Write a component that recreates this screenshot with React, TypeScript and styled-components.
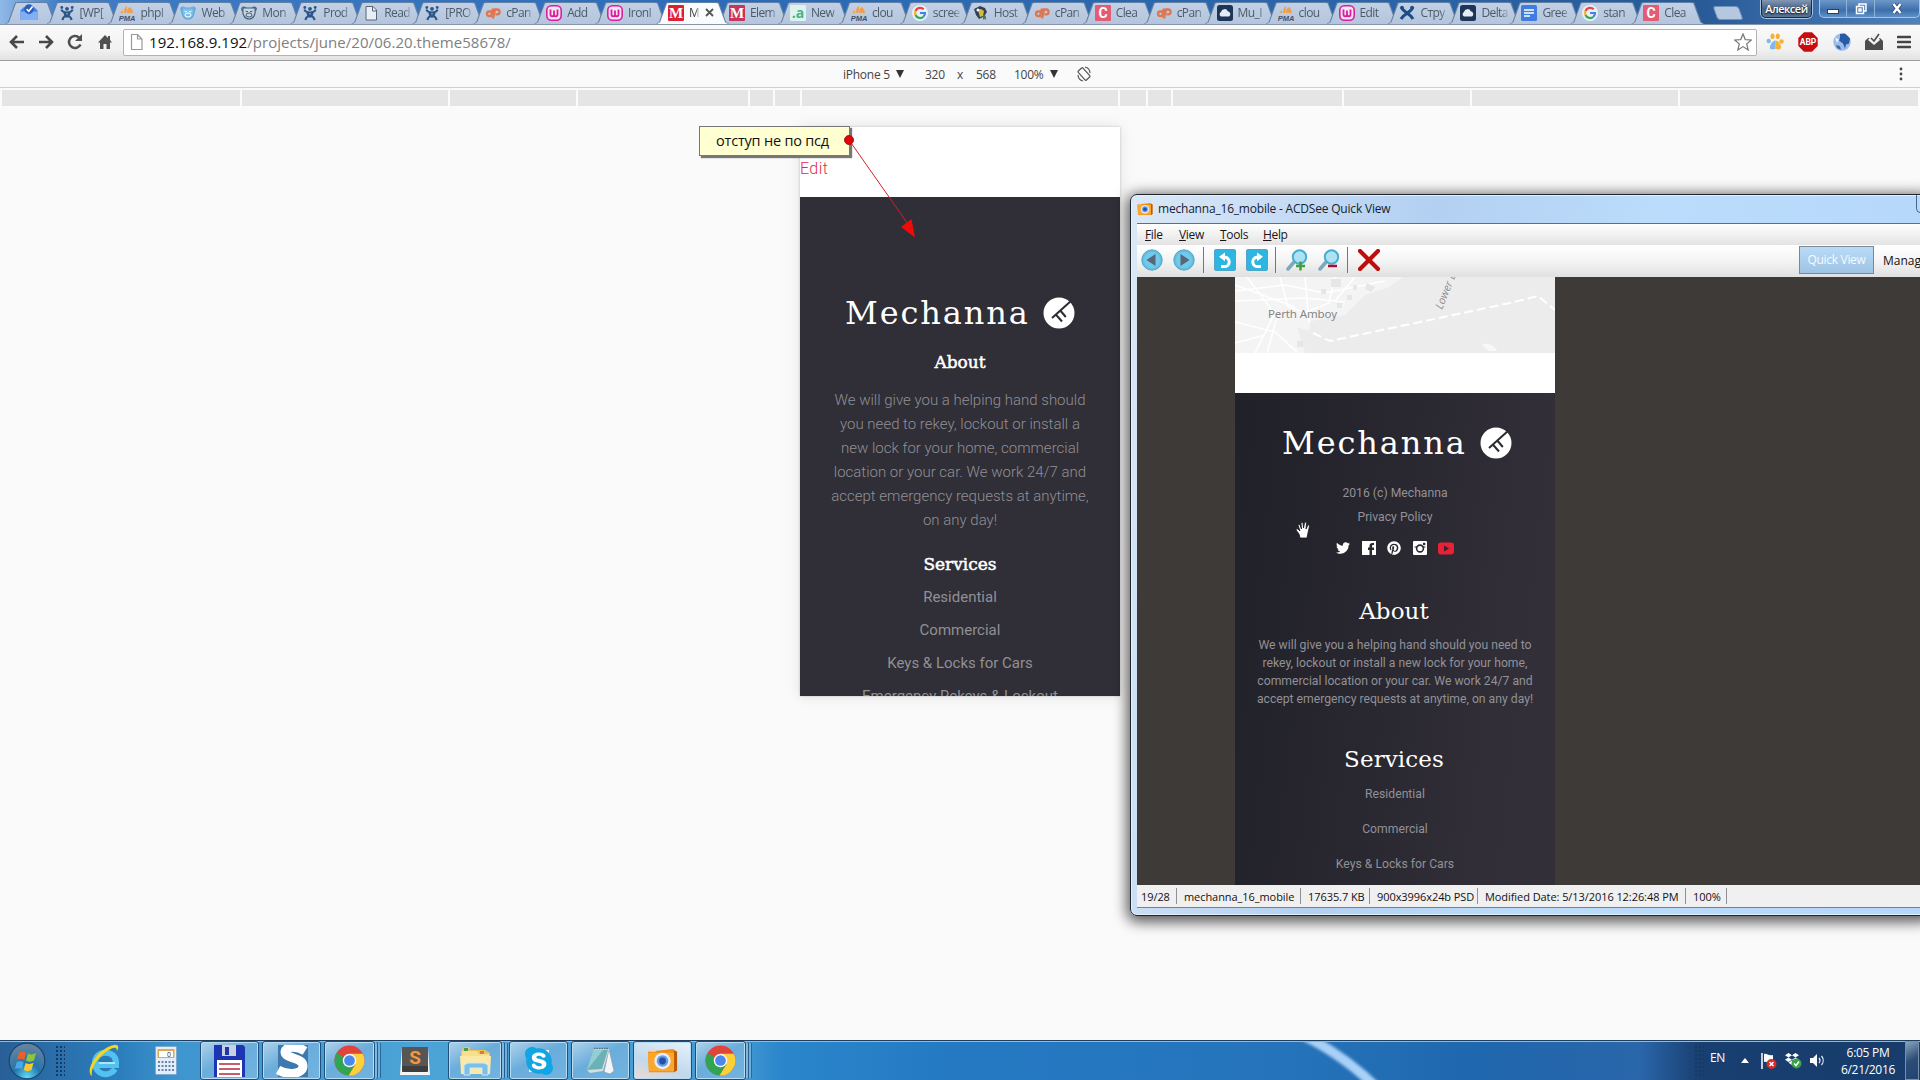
import React from "react";
import styled, { createGlobalStyle, css } from "styled-components";
import { FaTwitter, FaPinterest, FaSkype, FaDropbox } from "react-icons/fa";

const ui = `"Open Sans", "Noto Sans", "Liberation Sans", sans-serif`;
const slab = `"Roboto Slab", "DejaVu Serif", serif`;

const Global = createGlobalStyle`
  html, body { margin: 0; padding: 0; overflow: hidden; }
  * { box-sizing: border-box; }
  svg { display: block; flex: none; }
`;

const Screen = styled.div`
  width: 1920px;
  height: 1080px;
  display: flex;
  flex-direction: column;
  position: relative;
  overflow: hidden;
  background: #fafafa;
  font-family: ${ui};
`;

/* ---------- tab strip ---------- */
const TabStrip = styled.div`
  height: 24px;
  flex: none;
  display: flex;
  padding-left: 5px;
  overflow: hidden;
  background: linear-gradient(90deg, #8fb9e6 0, #3f7cc6 60px, #2c6cb9 700px, #2a64a8 1400px, #275a97 1700px, #4f82ba 1920px);
`;
const Tab = styled.div<{ $active?: boolean; $wide?: boolean }>`
  position: relative;
  isolation: isolate;
  flex: none;
  width: ${p => (p.$wide ? 53 : 73)}px;
  margin-right: ${p => (p.$wide ? -11.5 : -12.06)}px;
  padding: 1px 0 0 ${p => (p.$wide ? 15 : 12)}px;
  display: flex;
  align-items: center;
  z-index: ${p => (p.$active ? 2 : 1)};
  &::before, &::after {
    content: "";
    position: absolute;
    z-index: -1;
    inset: 0;
    background: #6380a3;
    clip-path: polygon(0 100%, 3px 92%, 10px 10%, 13px 2px, calc(100% - 13px) 2px, calc(100% - 10px) 10%, calc(100% - 3px) 92%, 100% 100%);
  }
  &::after {
    inset: 1px 1px 0 1px;
    background: ${p => (p.$active ? "#fafbfc" : "linear-gradient(#c3d1e6, #b3c5dd)")};
  }
`;
const TabLabel = styled.span<{ $active?: boolean }>`
  margin-left: 5px;
  flex: none;
  width: ${p => (p.$active ? 10 : 28)}px;
  font-size: 12px;
  line-height: 20px;
  letter-spacing: -0.6px;
  color: ${p => (p.$active ? "#444" : "#4d5a69")};
  white-space: nowrap;
  mask-image: linear-gradient(90deg, #000 72%, rgba(0, 0, 0, 0.25) 95%);
`;
const CloseGlyph = styled.svg`
  margin-left: 6px;
`;
const NewTab = styled.div`
  width: 29px;
  height: 14px;
  margin: 6px 0 0 23px;
  transform: skewX(20deg);
  border-radius: 3px;
  background: #b5c8df;
  border: 1px solid #6f93bd;
`;
const UserBadge = styled.div`
  width: 58px;
  height: 18px;
  margin-left: 20px;
  border: 1px solid #16294a;
  border-top: 0;
  border-radius: 0 0 5px 5px;
  box-shadow: 0 0 0 1px #a9c4e2;
  background: linear-gradient(#8298b4, #4a6486 50%, #5a7698);
  color: #fff;
  font-size: 11px;
  font-weight: 600;
  line-height: 17px;
  letter-spacing: -0.5px;
  text-align: center;
  text-shadow: 0 1px 2px #000;
`;
const Controls = styled.div`
  display: flex;
  margin-left: 7px;
  width: 101px;
  height: 18px;
  border: 1px solid #a5c3e4;
  border-top: 0;
  border-radius: 0 0 5px 5px;
  background: linear-gradient(#6e97c8, #3d6fab 60%, #5f90c6);
`;
const Control = styled.div<{ $w: number; $low?: boolean }>`
  width: ${p => p.$w}px;
  display: flex;
  align-items: center;
  justify-content: center;
  padding-top: ${p => (p.$low ? 5 : 0)}px;
  & + & { border-left: 1px solid #8fb2d9; }
`;

/* ---------- address bar ---------- */
const Toolbar = styled.div`
  height: 37px;
  flex: none;
  display: flex;
  align-items: center;
  padding: 0 9px 1px 9px;
  border-top: 1px solid #8795a8;
  border-bottom: 1px solid #9c9c9c;
  background: linear-gradient(#fafafa, #f1f1f1 70%, #e2e2e2);
`;
const NavButtons = styled.div`
  display: flex;
  gap: 13.2px;
  width: 114px;
`;
const Omnibox = styled.div`
  width: 1634px;
  height: 27px;
  display: flex;
  align-items: center;
  padding: 0 4px 0 6px;
  border: 1px solid #b3b3b0;
  border-radius: 2px;
  background: #fff;
`;
const Url = styled.div`
  flex: 1;
  margin-left: 5px;
  font-size: 15px;
  line-height: 22px;
  letter-spacing: 0.05px;
  color: #808080;
  span { color: #111; }
`;
const Extensions = styled.div`
  display: flex;
  flex: 1;
  margin-left: 9px;
  justify-content: space-between;
  align-items: center;
`;

/* ---------- device mode ---------- */
const DeviceBar = styled.div`
  height: 27px;
  flex: none;
  display: flex;
  align-items: center;
  padding: 0 14px 0 843px;
  border-bottom: 1px solid #cfcfcf;
  background: #fafafa;
  font-size: 12px;
  letter-spacing: -0.25px;
  color: #444;
`;
const DeviceItem = styled.span<{ $w: number; $indent?: number }>`
  width: ${p => p.$w}px;
  padding-left: ${p => p.$indent ?? 0}px;
  flex: none;
  white-space: nowrap;
`;
const Caret = styled.i`
  width: 0;
  height: 0;
  border: 4px solid transparent;
  border-top: 8px solid #333;
  border-bottom: 0;
`;
const Grow = styled.div`flex: 1;`;
const MediaBar = styled.div`
  height: 20px;
  flex: none;
  display: flex;
  gap: 2px;
  padding: 2px 2px;
  background: #fbfbfb;
`;
const Segment = styled.div<{ $w: number }>`
  flex: ${p => p.$w} 0 0;
  background: #e5e5e5;
`;
const Viewport = styled.div`
  flex: 1;
  display: flex;
  justify-content: center;
  align-items: flex-start;
  padding-top: 19px;
  background: #fafafa;
`;

/* ---------- phone page ---------- */
const Phone = styled.div`
  width: 320px;
  height: 569px;
  overflow: hidden;
  background: #fff;
  box-shadow: 0 0 2px #bbb, 0 0 14px rgba(0, 0, 0, 0.1);
  font-family: Roboto, sans-serif;
  text-align: center;
`;
const EditRow = styled.div`
  height: 70px;
  padding-top: 30px;
  text-align: left;
  font-size: 16px;
  font-weight: 300;
  line-height: 24px;
  letter-spacing: 0.4px;
  color: #e42b46;
`;
const PhoneFooter = styled.div`
  height: 499px;
  padding-top: 96px;
  background: #302e36;
  color: #909095;
`;
const BrandRow = styled.div`
  height: 40px;
  display: flex;
  align-items: center;
  padding-left: 45px;
`;
const BrandText = styled.div`
  width: 198px;
  text-align: left;
  font-family: ${slab};
  font-size: 32px;
  line-height: 40px;
  letter-spacing: 1.9px;
  color: #fff;
  white-space: nowrap;
`;
const Heading = styled.div<{ $big?: boolean; $top: number }>`
  margin-top: ${p => p.$top}px;
  font-family: ${slab};
  color: #fff;
  ${p => p.$big
    ? css`font-size: 23px; line-height: 34px; letter-spacing: 0.1px; padding-right: 2px;`
    : css`font-size: 17px; line-height: 26px; letter-spacing: 0; -webkit-text-stroke: 0.5px #fff;`}
`;
const Copy = styled.div<{ $top: number; $size: number; $line: number; $light?: boolean }>`
  margin-top: ${p => p.$top}px;
  font-size: ${p => p.$size}px;
  line-height: ${p => p.$line}px;
  font-weight: ${p => (p.$light ? 300 : 400)};
  white-space: pre-line;
`;

/* ---------- annotation ---------- */
const Note = styled.div`
  position: absolute;
  left: 699px;
  top: 126px;
  width: 151px;
  height: 30px;
  padding-left: 16px;
  border: 1px solid #777;
  box-shadow: 2px 2px 1px #777;
  background: #ffffd2;
  color: #111;
  font: 14.5px/27px "Open Sans", sans-serif;
  letter-spacing: -0.2px;
  white-space: nowrap;
`;
const Arrow = styled.svg`
  position: absolute;
  left: 840px;
  top: 130px;
`;

/* ---------- image viewer window ---------- */
const Window = styled.div`
  position: absolute;
  left: 1130px;
  top: 194px;
  width: 800px;
  height: 722px;
  display: flex;
  flex-direction: column;
  border: 1px solid #20252c;
  border-radius: 7px;
  padding: 0 0 7px 6px;
  background: linear-gradient(100deg, #dbe8f6 0, #b3d0f2 300px, #bbdcfb 520px, #b4d6fb);
  box-shadow: inset 0 0 0 1px #e3f1ff, 0 3px 14px 3px rgba(0, 0, 0, 0.65);
`;
const TitleBar = styled.div`
  height: 28px;
  flex: none;
  display: flex;
  align-items: center;
  font-size: 12px;
  letter-spacing: -0.2px;
  color: #16222e;
  white-space: nowrap;
  span { margin: 0 0 1px 5px; }
`;
const TitleButtonEdge = styled.div`
  width: 13px;
  height: 18px;
  margin: 0 0 10px auto;
  border: 1px solid #4b6684;
  border-top: 0;
  border-right: 0;
  border-radius: 0 0 0 5px;
`;
const MenuBar = styled.div`
  height: 22px;
  flex: none;
  display: flex;
  padding-left: 8px;
  border-top: 1px solid #56708f;
  background: linear-gradient(#fff, #e3e3e3);
  font-size: 12px;
  line-height: 21px;
  letter-spacing: -0.35px;
  color: #1a1416;
`;
const MenuItem = styled.div<{ $w: number }>`
  width: ${p => p.$w}px;
  &::first-letter { text-decoration: underline; }
`;
const ViewerTools = styled.div`
  height: 32px;
  flex: none;
  display: flex;
  align-items: center;
  padding-left: 4px;
  background: linear-gradient(#fff, #f4f4f4 50%, #e0e0e0);
  & > * { flex: none; }
`;
const ToolSlot = styled.div<{ $w: number }>`
  width: ${p => p.$w}px;
  padding-bottom: 3px;
`;
const ToolDivider = styled.div`
  width: 1px;
  height: 26px;
  margin: 0 10px 3px 0;
  background: #70777e;
`;
const ModeButton = styled.div`
  width: 75px;
  height: 28px;
  margin: 0 9px 2px 419px;
  border: 1px solid #7c8793;
  background: linear-gradient(#b9dbf7, #9fc3e4);
  color: #f4faff;
  font-size: 12px;
  line-height: 26px;
  letter-spacing: -0.3px;
  text-align: center;
`;
const ModeLabel = styled.div`
  font-size: 12px;
  padding-bottom: 2px;
  color: #111;
`;
const Canvas = styled.div`
  flex: 1;
  overflow: hidden;
  padding-left: 98px;
  background: #3e3a37;
`;
const DocumentPage = styled.div`
  width: 320px;
  background: #fff;
  text-align: center;
  font-family: Roboto, sans-serif;
`;
const DocFooter = styled.div`
  height: 500px;
  margin-top: 40px;
  padding-top: 30px;
  color: #919197;
  background: linear-gradient(97deg, #202129, #29272f 45%, #322f38 85%);
`;
const DocBrand = styled(BrandRow)`padding-left: 47px;`;
const Socials = styled.div`
  height: 20px;
  margin: 9px 0 0 101px;
  display: flex;
  align-items: center;
  gap: 11.5px;
  color: #fff;
`;
const StatusBar = styled.div`
  height: 23px;
  flex: none;
  display: flex;
  align-items: center;
  border-bottom: 1px solid #6f8296;
  background: #f1f0f0;
  font-size: 11px;
  letter-spacing: -0.07px;
  color: #111;
`;
const StatusCell = styled.div<{ $w: number; $first?: boolean }>`
  width: ${p => p.$w}px;
  height: 16px;
  padding-left: ${p => (p.$first ? 4 : 7)}px;
  line-height: 17px;
  border-right: 1px solid #8d9298;
  white-space: nowrap;
`;
const Hand = styled.svg`
  position: absolute;
  left: 1295px;
  top: 521px;
`;

/* ---------- taskbar ---------- */
const Taskbar = styled.div`
  height: 40px;
  flex: none;
  display: flex;
  align-items: center;
  border-top: 1px solid #1f3f60;
  box-shadow: inset 0 1px 0 #8fbbe0;
  background: linear-gradient(90deg, #285f96 0, #2a6da9 50px, #2b7ebc 120px, #3f95cd 180px, #4ba3d6 420px, #4599d3 740px, #2b86cb 780px, #2479c2 960px, #2574bb 1280px, #1f67ae 1480px, #2a66aa 1640px, #193f70 1700px, #173c6c 1920px);
  & > * { flex: none; }
`;
const Orb = styled.div`
  width: 55px;
  padding-left: 8px;
`;
const Grip = styled.div`
  width: 10px;
  height: 32px;
  background: radial-gradient(circle, #143a63 45%, transparent 50%) 0 0 / 4px 4px;
`;
const Launch = styled.div<{ $w: number }>`
  width: ${p => p.$w}px;
  height: 39px;
  display: flex;
  align-items: center;
  justify-content: center;
`;
const TaskButton = styled.div<{ $w: number; $gap: number; $active?: boolean; $stack?: boolean }>`
  width: ${p => p.$w}px;
  height: 39px;
  margin-right: ${p => p.$gap}px;
  display: flex;
  align-items: center;
  justify-content: center;
  border: 1px solid #1f4f7c;
  border-radius: 3px;
  background: ${p => (p.$active
    ? "linear-gradient(20deg, #f0d9cf, #c2d8ec 40%, #e6f2fb)"
    : "linear-gradient(150deg, #b0d2ea, #6aaddb 45%, #72b4e0)")};
  box-shadow: inset 0 0 0 1px #b9dcf3${p => (p.$stack ? ", 3px 0 0 -1px #7fb9e0, 4px 0 0 -1px #245d8d, 7px 0 0 -2px #6fb0db, 8px 0 0 -2px #2a6698" : "")};
`;
const Wallpaper = styled.div`
  width: 941px;
  overflow: hidden;
`;
const Tray = styled.div`
  display: flex;
  align-items: center;
  width: 225px;
  height: 39px;
  color: #fff;
  font-size: 12px;
  letter-spacing: -0.3px;
  & > * { flex: none; }
`;
const Lang = styled.div`
  width: 31px;
  margin: 0 0 6px 6px;
`;
const TrayIcons = styled.div`
  display: flex;
  align-items: center;
  gap: 8px;
  width: 97px;
  & > :first-child { margin-right: 3px; }
`;
const Clock = styled.div`
  width: 60px;
  text-align: center;
  line-height: 17px;
  white-space: nowrap;
`;
const ShowDesktop = styled.div`
  width: 14px;
  height: 39px;
  margin-left: auto;
  border: 1px solid #7790ad;
  background: linear-gradient(150deg, #8ca3bd, #2b4c76 50%, #224570);
`;

/* ---------- drawings ---------- */
type Kind = "jira" | "pma" | "bear" | "bear2" | "file" | "cp" | "w" | "m" | "m2" | "a" | "g" | "host" | "c" | "cloud" | "x" | "doc" | "inbox";

const FavText = ({ bg, fill = "#fff", t, font = "Liberation Serif", size = 15 }: { bg: string; fill?: string; t: string; font?: string; size?: number }) => (
  <svg width="16" height="16" viewBox="0 0 16 16">
    <rect width="16" height="16" rx="1" fill={bg} />
    <text x="8" y="13" textAnchor="middle" fontFamily={font} fontWeight="700" fontSize={size} fill={fill}>{t}</text>
  </svg>
);

function Favicon({ kind }: { kind: Kind }) {
  const s = { width: 16, height: 16, viewBox: "0 0 16 16" };
  switch (kind) {
    case "inbox":
      return <svg {...s} width="18" height="17"><path d="M0 6l3-3h10l3 3v9H0z" fill="#3f7fe0" /><path d="M0 7h5l3 3 3-3h5v8H0z" fill="#7fb0f5" /><circle cx="8" cy="4.800" r="4.500" fill="#2b5cb8" /><path d="M5.800 4.800l2 2 3.500-4.500" stroke="#fff" strokeWidth="1.500" fill="none" /></svg>;
    case "jira":
      return <svg {...s}><path d="M2.500 4.500Q3.500 7.500 8 7.500T13.500 4.500M5.500 7q0 3 2.500 4.500 2.500-1.500 2.500-4.500M3.500 15q.5-3.500 4.500-4.500 4 1 4.500 4.500" fill="none" stroke="#2a5588" strokeWidth="2.200" /><circle cx="8" cy="3.800" r="1.900" fill="#2a5588" /><circle cx="2.800" cy="2.500" r="1.400" fill="#2a5588" /><circle cx="13.200" cy="2.500" r="1.400" fill="#2a5588" /></svg>;
    case "x":
      return <svg {...s}><path d="M2 2c3 6 9 6 12 12M14 2c-2 6-9 6-12 12" stroke="#1d4c83" strokeWidth="3" fill="none" /><circle cx="3" cy="2.500" r="1.800" fill="#1d4c83" /><circle cx="13" cy="2.500" r="1.800" fill="#1d4c83" /></svg>;
    case "pma":
      return <svg {...s}><path d="M5 8c0-4 1-6 3-7 0 3 0 5-1 7zM8 8c0-4 1-5 3-6 2 2 3 4 3 6zM1 8l3-3v3z" fill="#efa04c" /><text x="8" y="15.500" textAnchor="middle" fontFamily="Liberation Sans" fontStyle="italic" fontWeight="700" fontSize="7.500" fill="#44506b">PMA</text></svg>;
    case "bear":
    case "bear2": {
      const c = kind === "bear" ? "#5aa7dc" : "#3f5a72";
      return <svg {...s}><circle cx="2.800" cy="4" r="2" fill="none" stroke={c} strokeWidth="1.200" /><circle cx="13.200" cy="4" r="2" fill="none" stroke={c} strokeWidth="1.200" /><path d="M2 3h12c1 7-2 11-6 11S1 10 2 3z" fill={kind === "bear" ? "#7fbfe9" : "#c9d6e6"} stroke={c} strokeWidth="1.200" /><path d="M4.500 6l1.500 1 1-1M9 6l1 1 1.500-1" stroke={kind === "bear" ? "#fff" : c} fill="none" /><ellipse cx="8" cy="10" rx="3" ry="2" fill="none" stroke={kind === "bear" ? "#fff" : c} /></svg>;
    }
    case "file":
      return <svg {...s}><path d="M3 1.500h7l3.500 3.500v10H3z" fill="#e8eef5" stroke="#5b6672" /><path d="M9.500 2v4H13" fill="none" stroke="#5b6672" /></svg>;
    case "cp":
      return <svg {...s} fill="none" stroke="#e0764f" strokeWidth="2.300"><path d="M6.500 6.500H4.300a2.300 2.300 0 0 0 0 4.600H6L8 3.500M8 13.500l2-9h2.200a2.400 2.400 0 0 1 0 4.800H10.500" /></svg>;
    case "w":
      return <svg {...s}><rect x="0.800" y="0.800" width="14.400" height="14.400" rx="4.500" fill="#f7e2f1" stroke="#d91fa0" strokeWidth="1.600" /><path d="M4.500 4.500v5a1.700 1.700 0 0 0 3.500 0V5.500v4a1.700 1.700 0 0 0 3.500 0v-5" fill="none" stroke="#d91fa0" strokeWidth="1.800" /></svg>;
    case "m": return <FavText bg="#e0202f" t="M" />;
    case "m2": return <FavText bg="#c8355c" t="M" />;
    case "a": return <FavText bg="#def3ee" fill="#3fb58a" t=".a" font="Open Sans" size={14} />;
    case "c": return <FavText bg="#e45b74" t="C" font="Roboto" size={14} />;
    case "g":
      return <svg {...s}><circle cx="8" cy="8" r="8" fill="#e9eff7" /><g fill="none" strokeWidth="2.200"><path d="M11.700 4.300A5 5 0 0 0 3.500 6" stroke="#e8483b" /><path d="M3.500 6a5 5 0 0 0 0 4" stroke="#f2b51c" /><path d="M3.500 10a5 5 0 0 0 8 1.700" stroke="#3aa757" /><path d="M11.500 11.700A5 5 0 0 0 13 8H8" stroke="#4481ec" /></g></svg>;
    case "host":
      return <svg {...s}><path d="M1 4l6-3 5 2 2 4-2 3 1 5-3-3-4 2-3-4z" fill="#31405a" /><path d="M5 5l3-1 3 2-1 5-3 1z" fill="#d8b93a" /><circle cx="5" cy="5" r="1.500" fill="#fff" /><path d="M10 8l3 4-3 3z" fill="#427a52" /></svg>;
    case "cloud":
      return <svg {...s}><rect width="16" height="16" rx="2.500" fill="#1d3557" /><path d="M4 11.500a2.500 2.500 0 0 1 0-4.500 3.600 3.600 0 0 1 6.800-.8A2.900 2.900 0 0 1 12 11.500z" fill="#e4edf6" /></svg>;
    case "doc":
      return <svg {...s}><rect width="16" height="16" rx="1.500" fill="#3f7ee0" /><path d="M3 5h10M3 8h10M3 11h6" stroke="#fff" strokeWidth="1.400" /></svg>;
  }
}

const Emblem = () => (
  <svg width="32" height="32" viewBox="0 0 32 32">
    <circle cx="16" cy="16" r="15.500" fill="#fff" />
    <path d="M28.500 3.500L9 21M12.800 17.500l6.200 7M17.300 13.500l5.500 6.500" stroke="#2c2a33" strokeWidth="2" fill="none" />
  </svg>
);

const ChromeLogo = () => (
  <svg width="31" height="31" viewBox="0 0 32 32">
    <circle cx="16" cy="16" r="15.500" fill="#e0443a" />
    <path d="M2.600 8.300A15.500 15.500 0 0 0 15 31.500l7-12-6-3.500z" fill="#31a352" />
    <path d="M15 31.500A15.500 15.500 0 0 0 29.700 9H16l6 11z" fill="#fbd03b" />
    <circle cx="16" cy="16" r="7" fill="#f4f6f6" />
    <circle cx="16" cy="16" r="5.500" fill="#4a88ea" />
  </svg>
);

const Camera = ({ size }: { size: number }) => (
  <svg width={size} height={size} viewBox="0 0 32 32">
    <path d="M1 7l26-3 4 3v19l-3 2L2 28z" fill="#f08c14" />
    <path d="M1 8h27v19H2z" fill="#fba62c" /><path d="M28 6l3 1v19l-3 2z" fill="#b85a0a" />
    <circle cx="16" cy="16.500" r="8.500" fill="#e6edf7" /><circle cx="16" cy="16.500" r="6" fill="#6a9be2" /><circle cx="16" cy="16.500" r="3.500" fill="#1f50ae" />
    <path d="M4 5l5-1v3H4z" fill="#f9d9a0" />
  </svg>
);

const RoundArrow = ({ flip }: { flip?: boolean }) => (
  <svg width="22" height="22" viewBox="0 0 22 22">
    <circle cx="11" cy="11" r="10.200" fill="#5fc0e2" stroke="#58a4c4" /><circle cx="11" cy="11" r="8" fill="#73c9e8" />
    <path d={flip ? "M7.500 5l9 6-9 6z" : "M14.500 5l-9 6 9 6z"} fill="#56677d" />
  </svg>
);
const Rotate = ({ flip }: { flip?: boolean }) => (
  <svg width="22" height="22" viewBox="0 0 22 22">
    <rect x="0.500" y="0.500" width="21" height="21" rx="1.500" fill="#2db6e2" stroke="#51a5c7" />
    <g transform={flip ? "translate(22 0) scale(-1 1)" : undefined}>
      <path d="M7 17.500h3.500a4.700 4.700 0 0 0 1-9.300H9" fill="none" stroke="#fff" strokeWidth="3" /><path d="M5 7.800l6-4.300v8.700z" fill="#fff" />
    </g>
  </svg>
);
const Magnifier = ({ minus }: { minus?: boolean }) => (
  <svg width="22" height="22" viewBox="0 0 22 22">
    <path d="M2 20l7-8" stroke="#7da9bd" strokeWidth="3.500" strokeLinecap="round" />
    <circle cx="13.500" cy="8" r="6.700" fill="#aee2f2" stroke="#45aed2" strokeWidth="2" />
    {minus ? <path d="M10 17h9" stroke="#a30f2c" strokeWidth="2.500" /> : <path d="M10 17h9M14.500 12.500v9" stroke="#41a03c" strokeWidth="2.500" />}
  </svg>
);

const Map = () => (
  <svg width="320" height="76" viewBox="0 0 320 76">
    <rect width="320" height="76" fill="#ececec" />
    <path d="M0 0h168l-14 10-24 8-20 20-34 6-2 10-12-4 8 26H0z" fill="#f4f4f4" />
    <g stroke="#fff" fill="none" strokeWidth="1.500">
      <path d="M0 14l50-6 40 8 60-12M0 24l70-3 40 4M12 0l30 40-10 36M45 0l8 30 26 8M70 0l4 46M100 0l-6 26-30 12M0 45l40 10 22 20M20 76l20-40M0 8l60 22M120 0l-20 24M0 66l30-8" />
    </g>
    <g fill="#e6e6e6"><path d="M96 2h10v8H96zM112 18h5v5h-5zM132 6l8 4-4 5-6-3zM102 26h5v5h-5zM86 12h5v5h-5zM118 8h4v5h-4z" /><path d="M62 64h6v6h-6z" /></g>
    <path d="M78 56l17 8 180-38 28-7 17 14" fill="none" stroke="#fff" strokeWidth="2" strokeDasharray="9 4" />
    <path d="M247 68c6-3 12 0 15 6h-8z" fill="#f8f8f8" />
    <text x="33" y="41" fontFamily="Noto Sans" fontSize="11.500" fill="#858585" textLength="69">Perth Amboy</text>
    <text x="0" y="0" transform="translate(207 33) rotate(-68)" fontFamily="Open Sans" fontStyle="italic" fontSize="11" fill="#8c8c8c">Lower B</text>
  </svg>
);

const tabs: [Kind, string][] = [
  ["jira", "[WP["], ["pma", "phpI"], ["bear", "Web"], ["bear2", "Mon"], ["jira", "Prod"], ["file", "Read"], ["jira", "[PRO"],
  ["cp", "cPan"], ["w", "Add"], ["w", "IronI"], ["m", "M"], ["m2", "Elem"], ["a", "New"], ["pma", "clou"], ["g", "scree"],
  ["host", "Host"], ["cp", "cPan"], ["c", "Clea"], ["cp", "cPan"], ["cloud", "Mu_I"], ["pma", "clou"], ["w", "Edit"],
  ["x", "Стру"], ["cloud", "Delta"], ["doc", "Gree"], ["g", "stan"], ["c", "Clea"],
];
const segments = [238, 206, 126, 170, 23, 25, 315, 26, 23, 169, 126, 206, 238];

export default function App() {
  return (
    <Screen>
      <Global />
      <TabStrip>
        <Tab $wide><Favicon kind="inbox" /></Tab>
        {tabs.map(([k, label], i) => (
          <Tab key={i} $active={i === 10}>
            <Favicon kind={k} />
            <TabLabel $active={i === 10}>{label}</TabLabel>
            {i === 10 && <CloseGlyph width="9" height="9" viewBox="0 0 9 9"><path d="M1 1l7 7M8 1L1 8" stroke="#555" strokeWidth="1.800" /></CloseGlyph>}
          </Tab>
        ))}
        <NewTab />
        <UserBadge>Алексей</UserBadge>
        <Controls>
          <Control $w={27} $low><svg width="12" height="5"><rect x="0.500" y="0.500" width="11" height="4" fill="#fff" stroke="#333c50" /></svg></Control>
          <Control $w={28}><svg width="12" height="12" fill="none" stroke="#fff" strokeWidth="1.500"><path d="M4 3V1h7v7H9" /><rect x="1.500" y="3.500" width="7" height="7" /><rect x="4" y="6" width="2" height="2" /></svg></Control>
          <Control $w={46}><svg width="12" height="11"><path d="M2.500 1l7 9M9.500 1l-7 9" stroke="#28456c" strokeWidth="4" /><path d="M2.500 1l7 9M9.500 1l-7 9" stroke="#fff" strokeWidth="2.500" /></svg></Control>
        </Controls>
      </TabStrip>

      <Toolbar>
        <NavButtons>
          {["M15 8H2M8 2L2 8l6 6", "M1 8h13M8 2l6 6-6 6"].map(d => (
            <svg key={d} width="16" height="16" viewBox="0 0 16 16"><path d={d} fill="none" stroke="#484848" strokeWidth="2.600" /></svg>
          ))}
          <svg width="16" height="16" viewBox="0 0 16 16"><path d="M13.500 10.500A6 6 0 1 1 12 3.500" fill="none" stroke="#505050" strokeWidth="2.600" /><path d="M15 0v7H8z" fill="#505050" /></svg>
          <svg width="16" height="16" viewBox="0 0 16 16"><path d="M8 1L1 8.500h2V15h3.500v-5h3v5H13V8.500h2L13 6V2h-2v2z" fill="#505050" /></svg>
        </NavButtons>
        <Omnibox>
          <svg width="14" height="16" viewBox="0 0 14 16"><path d="M1.500.5h6l4.500 4.500v10.500H1.500zM7.500.5V5H12" fill="#fff" stroke="#999" strokeWidth="1.200" /></svg>
          <Url><span>192.168.9.192</span>/projects/june/20/06.20.theme58678/</Url>
          <svg width="18" height="18" viewBox="0 0 18 18"><path d="M9 1l2.300 5.600 6 .4-4.600 3.900L14.200 17 9 13.600 3.800 17l1.500-6.100L.7 7l6-.4z" fill="#fff" stroke="#777" strokeWidth="1.200" /></svg>
        </Omnibox>
        <Extensions>
          <svg width="18" height="18" viewBox="0 0 18 18"><g fill="#f3b135"><ellipse cx="6.500" cy="3.300" rx="2" ry="2.800" /><ellipse cx="11.800" cy="3.300" rx="2" ry="2.800" /><circle cx="15.500" cy="8.500" r="2.200" /><path d="M9.500 7.500q3 0 5 4.500t-2 4.500q-1.500 0-3-.8z" /></g><g fill="#83b7ec"><circle cx="2.700" cy="8" r="2.200" /><path d="M9.500 7.500q-3 0-5 4.500t2 4.500q1.500 0 3-.8z" /></g></svg>
          <svg width="20" height="20" viewBox="0 0 20 20"><path d="M6 .3h8L19.700 6v8L14 19.700H6L.3 14V6z" fill="#c70d12" /><text x="10" y="13.400" textAnchor="middle" fontFamily="Roboto" fontSize="8.500" fontWeight="700" fill="#fff">ABP</text></svg>
          <svg width="18" height="18" viewBox="0 0 18 18"><circle cx="9" cy="9" r="8.700" fill="#9bbce8" /><path d="M7 1l5-.5 5 5-1 5-3 1-1 4-2-5-4-3 1-3z" fill="#285aa6" /><path d="M2 5l4 1-2 4z" fill="#e7f0fb" /><path d="M3 12l4 1 1 4-4-2z" fill="#3a6ab5" /></svg>
          <svg width="18" height="18" viewBox="0 0 18 18"><path d="M0 8l3-3h12l3 3v9H0z" fill="#4d4d4d" /><path d="M3 7l5-6h4l3 6-6 5z" fill="#f2f2f2" /><path d="M6 5l3 3 5-7" stroke="#4d4d4d" strokeWidth="1.600" fill="none" /></svg>
          <svg width="14" height="14" viewBox="0 0 14 14"><path d="M1 2h12M1 7h12M1 12h12" stroke="#454545" strokeWidth="2.600" strokeLinecap="round" /></svg>
        </Extensions>
      </Toolbar>

      <DeviceBar>
        <DeviceItem $w={53}>iPhone 5</DeviceItem><Caret />
        <DeviceItem $w={53} $indent={21}>320</DeviceItem>
        <DeviceItem $w={19}>x</DeviceItem><DeviceItem $w={38}>568</DeviceItem>
        <DeviceItem $w={36}>100%</DeviceItem><Caret />
        <Grow>
          <svg width="40" height="16" viewBox="0 0 40 16"><g transform="translate(26 8)" fill="none" stroke="#555" strokeWidth="1.200"><rect x="-3.200" y="-6" width="6.400" height="12" rx="1" transform="rotate(-42)" /><path d="M-6 1a6.500 6.500 0 0 0 5 6M6-1a6.500 6.500 0 0 0-5-6" /></g></svg>
        </Grow>
        <svg width="10" height="14" fill="#444"><circle cx="5" cy="2" r="1.400" /><circle cx="5" cy="7" r="1.400" /><circle cx="5" cy="12" r="1.400" /></svg>
      </DeviceBar>
      <MediaBar>{segments.map((w, i) => <Segment key={i} $w={w} />)}</MediaBar>

      <Viewport>
        <Phone>
          <EditRow>Edit</EditRow>
          <PhoneFooter>
            <BrandRow><BrandText>Mechanna</BrandText><Emblem /></BrandRow>
            <Heading $top={16}>About</Heading>
            <Copy $top={13} $size={15} $line={24} $light>{"We will give you a helping hand should\nyou need to rekey, lockout or install a\nnew lock for your home, commercial\nlocation or your car. We work 24/7 and\naccept emergency requests at anytime,\non any day!"}</Copy>
            <Heading $top={19}>Services</Heading>
            <Copy $top={4} $size={15} $line={33}>{"Residential\nCommercial\nKeys & Locks for Cars\nEmergency Rekeys & Lockout"}</Copy>
          </PhoneFooter>
        </Phone>
      </Viewport>

      <Taskbar>
        <Orb>
          <svg width="38" height="38" viewBox="0 0 38 38">
            <defs><radialGradient id="orb" cx="50%" cy="95%" r="85%"><stop offset="0" stopColor="#5fdcf4" /><stop offset=".45" stopColor="#2474ad" /><stop offset="1" stopColor="#62839f" /></radialGradient></defs>
            <circle cx="19" cy="19" r="17.800" fill="url(#orb)" stroke="#1b456d" strokeWidth="1.200" />
            <path d="M11 10.500c3-1.500 5-1 7 .3l-1.800 7.200c-2-1.300-4-1.600-7-.3z" fill="#e7622b" />
            <path d="M20 11.500c3 1.500 5 1 8-.5l-2 7.500c-3 1.500-5 1.500-8 .2z" fill="#8cc63f" />
            <path d="M8.700 20c3-1.300 5-1 7 .3l-1.800 7c-2-1.300-4-1.500-7-.2z" fill="#4aa8e8" />
            <path d="M17.500 21c3 1.500 5 1.200 8-.2l-2 7.300c-3 1.500-5 1.300-7.800 0z" fill="#fbc72e" />
          </svg>
        </Orb>
        <Grip />
        <Launch $w={78}>
          <svg width="36" height="38" viewBox="0 0 36 38"><path d="M29 27c-6 9-20 6-20-6 0-13 20-14 21-1v3H12" fill="none" stroke="#54c2f0" strokeWidth="6" /><path d="M13 21h16" stroke="#cdf0ff" strokeWidth="1.500" /><path d="M6 34C-2 29 12 6 28 3c5-1 5 3 3 6 0-4-3-4-8-1C12 14 4 27 6 34z" fill="#f6d51e" /></svg>
        </Launch>
        <Launch $w={46}>
          <svg width="22" height="30" viewBox="0 0 22 30"><rect x="0.500" y="0.500" width="21" height="28" rx="1" fill="#e3eefa" stroke="#7faad0" /><rect x="2.500" y="3" width="17" height="9" fill="#e8a54f" /><rect x="4" y="5" width="14" height="6" fill="#fff" /><text x="12" y="10.500" fontSize="7" fontFamily="Open Sans" fill="#333">0</text><g stroke="#6b87a5" strokeWidth="2" strokeDasharray="2 1.500"><path d="M3 16h16M3 20h16M3 24h16" /></g></svg>
        </Launch>
        <Launch $w={11} />
        <TaskButton $w={59} $gap={3}>
          <svg width="31" height="32" viewBox="0 0 31 32"><path d="M0 0h29l2 2v30H0z" fill="#1b35b3" /><rect x="8" y="0" width="14" height="11" fill="#c9d2de" /><rect x="11" y="2" width="4" height="8" fill="#1b35b3" /><rect x="3" y="15" width="25" height="17" fill="#fff" /><path d="M5 19h21M5 24h21M5 29h21" stroke="#b32a3c" strokeWidth="1.500" /></svg>
        </TaskButton>
        <TaskButton $w={59} $gap={3}>
          <svg width="32" height="32" viewBox="0 0 32 32"><path d="M2 0h30v32H2z" fill="#3d79ae" /><path d="M29 6c-8-5-19-5-20 1 0 7 18 5 18 14 0 8-14 10-25 4" fill="none" stroke="#fff" strokeWidth="9" /></svg>
        </TaskButton>
        <TaskButton $w={51} $gap={7} $stack><ChromeLogo /></TaskButton>
        <Launch $w={66}>
          <svg width="32" height="30" viewBox="0 0 32 30"><path d="M3 1h26l2 28H1z" fill="#f4f4f4" /><rect x="3" y="1" width="26" height="25" rx="1" fill="#3d3d3d" /><rect x="3" y="1" width="26" height="19" fill="#565656" /><text x="16" y="17.500" textAnchor="middle" fontFamily="Roboto" fontWeight="700" fontSize="19" fill="#f6973b">S</text></svg>
        </Launch>
        <TaskButton $w={54} $gap={7} $stack>
          <svg width="33" height="32" viewBox="0 0 33 32"><path d="M2 5l3-3h6v3h15l5 3v20H2z" fill="#e8c55c" /><path d="M3 6h15l2 3h10v17H3z" fill="#f7df91" /><path d="M5 3h4v3H5z" fill="#4b9b4d" /><path d="M21 6h4v3h-4z" fill="#d87b45" /><path d="M1 11h31l-1 18H2z" fill="#fbe9a8" /><path d="M5 30V20l4-2h16l4 2v10h-6v-7H11v7z" fill="#7cc0ea" stroke="#c9e9fa" /></svg>
        </TaskButton>
        <TaskButton $w={59} $gap={3}>
          <svg width="32" height="32" viewBox="0 0 32 32"><rect x="6" y="5" width="20" height="22" fill="#fff" /><FaSkype size={32} color="#12a5e4" /></svg>
        </TaskButton>
        <TaskButton $w={59} $gap={3}>
          <svg width="30" height="30" viewBox="0 0 30 30"><path d="M23 3l5 22-4 3-6-2z" fill="#f4f6f6" stroke="#8e9da5" strokeWidth="0.700" /><path d="M8 3h15l-6 22-13 2-3-3z" fill="#d5dfe2" /><path d="M8 4h14l-6 19-15 1z" fill="#6bb1b6" /><path d="M8 4h9L1 24z" fill="#93cfd2" /><path d="M8 2.500h15" stroke="#5c6c72" strokeWidth="1.500" strokeDasharray="1.500 1" /></svg>
        </TaskButton>
        <TaskButton $w={59} $gap={3} $active><Camera size={31} /></TaskButton>
        <TaskButton $w={51} $gap={7} $stack><ChromeLogo /></TaskButton>
        <Wallpaper>
          <svg width="941" height="38" viewBox="0 0 941 38">
            <defs><filter id="soft" x="-20%" y="-40%" width="140%" height="180%"><feGaussianBlur stdDeviation="1.800" /></filter></defs>
            <path d="M543 -10Q592 12 632 54" fill="none" stroke="#a9d0f6" strokeWidth="10" filter="url(#soft)" />
          </svg>
        </Wallpaper>
        <Tray>
          <Grip />
          <Lang>EN</Lang>
          <TrayIcons>
            <svg width="8" height="5"><path d="M0 5l4-5 4 5z" fill="#fff" /></svg>
            <svg width="17" height="18" viewBox="0 0 17 18"><path d="M2 1v16" stroke="#fff" strokeWidth="1.500" /><path d="M4 2c3-1 4 2 9 1v8c-5 1-6-2-9-1z" fill="#fff" /><circle cx="11.500" cy="12" r="5" fill="#d62a28" /><path d="M9.500 10l4 4M13.500 10l-4 4" stroke="#fff" strokeWidth="1.500" /></svg>
            <svg width="17" height="17" viewBox="0 0 17 17"><FaDropbox size={14} color="#fff" /><circle cx="11.500" cy="11.500" r="5" fill="#38a545" /><path d="M9 11.500l2 2 3-4" fill="none" stroke="#fff" strokeWidth="1.500" /></svg>
            <svg width="15" height="15" viewBox="0 0 15 15"><path d="M0 5h3l4-4v13l-4-4H0z" fill="#fff" /><path d="M9 5a4 4 0 0 1 0 5M11.500 3a7 7 0 0 1 0 9" stroke="#dfe9f5" fill="none" strokeWidth="1.300" /></svg>
          </TrayIcons>
          <Clock>6:05 PM<br />6/21/2016</Clock>
          <ShowDesktop />
        </Tray>
      </Taskbar>

      <Note>отступ не по псд</Note>
      <Arrow width="90" height="120" viewBox="0 0 90 120">
        <path d="M9 10L68 94" stroke="#d5202c" strokeWidth="1" />
        <circle cx="9" cy="10" r="4.500" fill="#e6000a" stroke="#9a1a1a" />
        <path d="M75 107.500L61 97l10.500-8z" fill="#f20a0a" />
      </Arrow>

      <Window>
        <TitleBar>
          <Camera size={16} /><span>mechanna_16_mobile - ACDSee Quick View</span>
          <TitleButtonEdge />
        </TitleBar>
        <MenuBar>
          <MenuItem $w={34}>File</MenuItem><MenuItem $w={41}>View</MenuItem><MenuItem $w={43}>Tools</MenuItem><MenuItem $w={40}>Help</MenuItem>
        </MenuBar>
        <ViewerTools>
          <ToolSlot $w={32}><RoundArrow /></ToolSlot><ToolSlot $w={30}><RoundArrow flip /></ToolSlot><ToolDivider />
          <ToolSlot $w={32}><Rotate /></ToolSlot><ToolSlot $w={29}><Rotate flip /></ToolSlot><ToolDivider />
          <ToolSlot $w={32}><Magnifier /></ToolSlot><ToolSlot $w={29}><Magnifier minus /></ToolSlot><ToolDivider />
          <ToolSlot $w={22}><svg width="22" height="22" viewBox="0 0 22 22"><path d="M2 2l18 18M20 2L2 20" stroke="#bd0d0d" strokeWidth="4.200" strokeLinecap="round" /></svg></ToolSlot>
          <ModeButton>Quick View</ModeButton>
          <ModeLabel>Manage</ModeLabel>
        </ViewerTools>
        <Canvas>
          <DocumentPage>
            <Map />
            <DocFooter>
              <DocBrand><BrandText>Mechanna</BrandText><Emblem /></DocBrand>
              <Copy $top={18} $size={12.2} $line={24}>{"2016 (c) Mechanna\nPrivacy Policy"}</Copy>
              <Socials>
                <FaTwitter size={14} />
                <svg width="14" height="14" viewBox="0 0 14 14"><path d="M0 0h14v14h-4V9h2V6.500h-2V5q0-1 1-1h1V2h-1.500Q7.500 2 7.500 5v1.500H6V9h1.500v5H0z" fill="#fff" /></svg>
                <FaPinterest size={14} />
                <svg width="14" height="14" viewBox="0 0 14 14"><rect width="14" height="14" rx="1" fill="#fff" /><path d="M1.500 6H4M10 6h2.500" stroke="#2a2830" /><circle cx="7" cy="7.500" r="3.400" fill="#fff" stroke="#2a2830" strokeWidth="1.600" /><rect x="10" y="1.800" width="2.300" height="2.300" fill="#2a2830" /></svg>
                <svg width="16" height="13" viewBox="0 0 16 13"><rect y="0.500" width="16" height="12" rx="3" fill="#ec1f34" /><path d="M6 3.500l5 3-5 3z" fill="#2a2830" /></svg>
              </Socials>
              <Heading $big $top={36}>About</Heading>
              <Copy $top={8} $size={12.2} $line={18}>{"We will give you a helping hand should you need to\nrekey, lockout or install a new lock for your home,\ncommercial location or your car. We work 24/7 and\naccept emergency requests at anytime, on any day!"}</Copy>
              <Heading $big $top={34}>Services</Heading>
              <Copy $top={1} $size={12.2} $line={35}>{"Residential\nCommercial\nKeys & Locks for Cars"}</Copy>
            </DocFooter>
          </DocumentPage>
        </Canvas>
        <StatusBar>
          <StatusCell $first $w={40}>19/28</StatusCell><StatusCell $w={124}>mechanna_16_mobile</StatusCell><StatusCell $w={69}>17635.7 KB</StatusCell>
          <StatusCell $w={108}>900x3996x24b PSD</StatusCell><StatusCell $w={208}>Modified Date: 5/13/2016 12:26:48 PM</StatusCell><StatusCell $w={41}>100%</StatusCell>
        </StatusBar>
      </Window>
      <Hand width="17" height="18" viewBox="0 0 17 18">
        <path d="M5 17l-1-4-3-4q0-2 2-1l2 2-2-6q1-2 2 0l1.500 4L6 2q1-2 2 0l.5 5 1-5q1-2 2 0L11 8l2-4q2-1 1.500 1L13 12l-1 5z" fill="#fff" stroke="#16161a" strokeWidth="0.800" />
      </Hand>
    </Screen>
  );
}
